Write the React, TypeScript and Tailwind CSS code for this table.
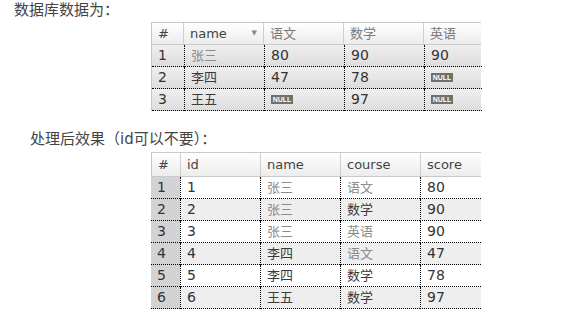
import React from "react";

const font = { fontFamily: '"DejaVu Sans", "Noto Sans CJK SC", sans-serif' };

type Cell = { v: string | null; dim?: boolean };

const srcHead = ["#", "name", "语文", "数学", "英语"];
const srcRows: Cell[][] = [
  [{ v: "1" }, { v: "张三", dim: true }, { v: "80" }, { v: "90" }, { v: "90" }],
  [{ v: "2" }, { v: "李四" }, { v: "47" }, { v: "78" }, { v: null }],
  [{ v: "3" }, { v: "王五" }, { v: null }, { v: "97" }, { v: null }],
];

const outHead = ["#", "id", "name", "course", "score"];
const outRows: Cell[][] = [
  [{ v: "1" }, { v: "1" }, { v: "张三", dim: true }, { v: "语文", dim: true }, { v: "80" }],
  [{ v: "2" }, { v: "2" }, { v: "张三", dim: true }, { v: "数学" }, { v: "90" }],
  [{ v: "3" }, { v: "3" }, { v: "张三", dim: true }, { v: "英语", dim: true }, { v: "90" }],
  [{ v: "4" }, { v: "4" }, { v: "李四" }, { v: "语文", dim: true }, { v: "47" }],
  [{ v: "5" }, { v: "5" }, { v: "李四" }, { v: "数学" }, { v: "78" }],
  [{ v: "6" }, { v: "6" }, { v: "王五" }, { v: "数学" }, { v: "97" }],
];

function NullBadge() {
  return (
    <span className="inline-flex h-[9px] w-[22px] items-center justify-center bg-[#6f6f6f] font-['Liberation_Sans',sans-serif] text-[7px] font-bold leading-none text-white">
      NULL
    </span>
  );
}

function CellText({ c }: { c: Cell }) {
  if (c.v === null) return <NullBadge />;
  const cjk = /[\u4e00-\u9fff]/.test(c.v);
  return (
    <span className={`${cjk ? "text-[13px] text-[#3a3a3a]" : "text-[14px] text-[#333]"} ${c.dim ? "!text-[#8c8c8c]" : ""}`}>
      {c.v}
    </span>
  );
}

export default function App() {
  return (
    <div className="flex h-[321px] w-[579px] flex-col bg-white text-[#333]" style={font}>
      <div className="pl-[14px] text-[15px] leading-[20px] text-[#444]">数据库数据为：</div>

      {/* source table */}
      <div className="ml-[151px] mt-[2px] w-[330px]">
        <div className="grid h-[23px] grid-cols-[32px_80px_80px_80px_58px] border-t border-l border-b border-[#c9c9c9] bg-gradient-to-b from-white to-[#ececec]">
          {srcHead.map((h, i) => (
            <div
              key={h}
              className={`flex items-center justify-between px-[6px] text-[13px] ${i < 4 ? "border-r border-[#cfcfcf]" : ""} ${/[\u4e00-\u9fff]/.test(h) ? "text-[#7a7a7a]" : "text-[#444]"}`}
            >
              <span>{h}</span>
              {h === "name" && <span className="text-[7px] text-[#888]">▼</span>}
            </div>
          ))}
        </div>
        {srcRows.map((r, ri) => (
          <div
            key={ri}
            className="grid h-[22px] grid-cols-[32px_80px_80px_80px_58px] border-l border-[#c9c9c9] bg-gradient-to-b from-[#efefef] to-[#dcdcdc]"
          >
            {r.map((c, ci) => (
              <div
                key={ci}
                className={`flex items-center border-b border-dotted border-b-black px-[6px] ${ci > 0 ? "border-l border-l-black" : ""}`}
              >
                <CellText c={c} />
              </div>
            ))}
          </div>
        ))}
      </div>

      <div className="mt-[18px] pl-[30px] text-[15px] leading-[20px] text-[#444]">处理后效果（id可以不要）：</div>

      {/* result table */}
      <div className="ml-[151px] mt-[3px] w-[330px]">
        <div className="grid h-[25px] grid-cols-[29px_80px_80px_80px_61px] border-t border-l border-b border-[#c9c9c9] bg-gradient-to-b from-white to-[#ececec]">
          {outHead.map((h, i) => (
            <div
              key={h}
              className={`flex items-center px-[6px] text-[13px] text-[#444] ${i < 4 ? "border-r border-[#cfcfcf]" : ""}`}
            >
              {h}
            </div>
          ))}
        </div>
        {outRows.map((r, ri) => (
          <div
            key={ri}
            className={`grid h-[22px] grid-cols-[29px_80px_80px_80px_61px] ${ri % 2 === 1 ? "bg-[#eeeeee]" : "bg-white"}`}
          >
            {r.map((c, ci) => (
              <div
                key={ci}
                className={`flex items-center border-b border-dotted border-b-black px-[6px] ${ci > 0 ? "border-l border-l-black" : "bg-[#d3d3d3]"}`}
              >
                <CellText c={c} />
              </div>
            ))}
          </div>
        ))}
      </div>
    </div>
  );
}
